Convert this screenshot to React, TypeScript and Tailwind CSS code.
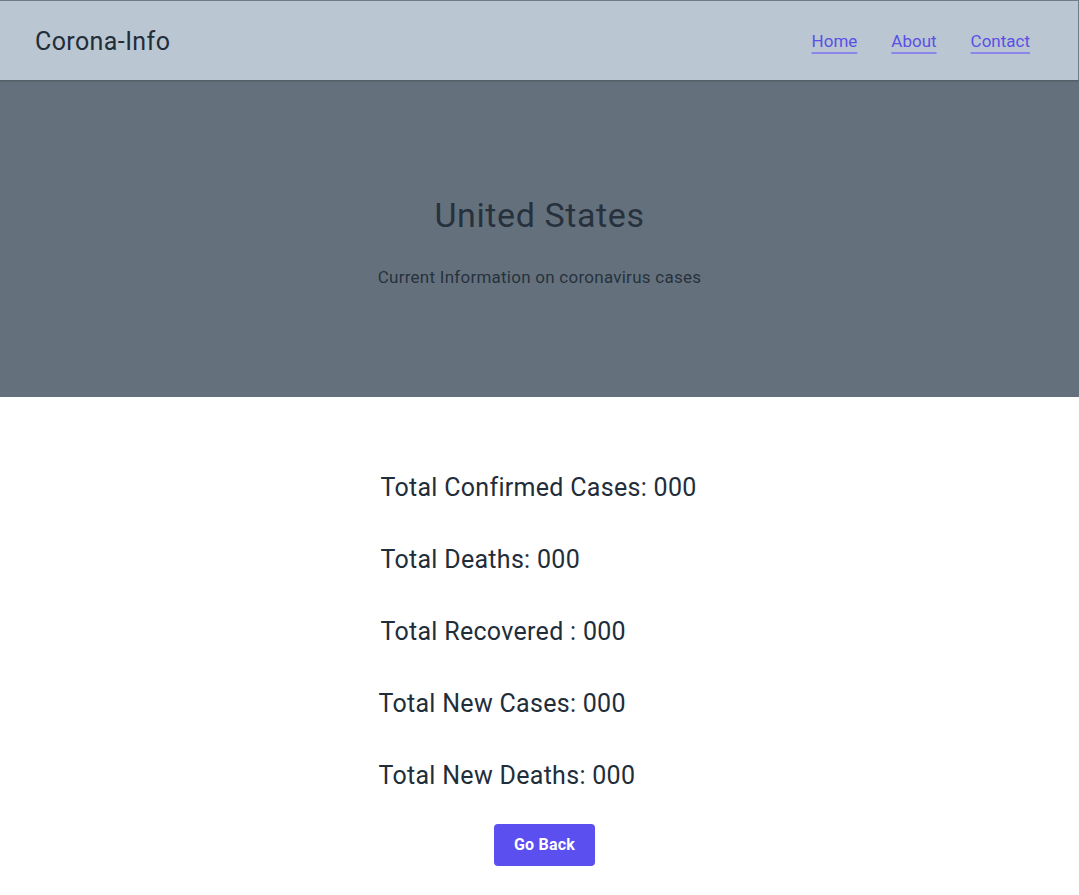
import React from "react";

export default function App() {
  const stats = [
    { label: "Total Confirmed Cases: 000", shift: false },
    { label: "Total Deaths: 000", shift: false },
    { label: "Total Recovered : 000", shift: false },
    { label: "Total New Cases: 000", shift: true },
    { label: "Total New Deaths: 000", shift: true },
  ];
  return (
    <div className="min-h-[895px] bg-white text-[#222d3a]" style={{ fontFamily: "Roboto, 'Noto Sans', sans-serif" }}>
      <nav className="h-[80px] bg-[#bac6d1] border-t border-r border-[#6f7d89] flex items-center justify-between pl-[35px] pr-[48px] shadow-[0_1px_2px_rgba(0,0,0,0.25)] relative z-10">
        <div className="text-[25px] leading-none tracking-[0.4px] pt-[2px]">Corona-Info</div>
        <div className="flex items-center gap-[34px] text-[17px] text-[#5b4fe6] pt-[2px]">
          <a href="#" className="underline decoration-[#8d86ea] decoration-2 underline-offset-[5px]">Home</a>
          <a href="#" className="underline decoration-[#8d86ea] decoration-2 underline-offset-[5px]">About</a>
          <a href="#" className="underline decoration-[#8d86ea] decoration-2 underline-offset-[5px]">Contact</a>
        </div>
      </nav>
      <section className="h-[317px] bg-[#64717c] flex flex-col items-center pt-[115px]">
        <h1 className="text-[34px] leading-[40px] tracking-[0.6px] text-[#27313d]">United States</h1>
        <p className="mt-[30px] text-[17px] leading-[24px] tracking-[0.25px] text-[#27313d]">Current Information on coronavirus cases</p>
      </section>
      <main className="flex flex-col items-center pt-[75px]">
        <div className="flex flex-col gap-[40px] -ml-[2px]">
          {stats.map((s) => (
            <div key={s.label} className={`text-[25px] leading-[32px] tracking-[0.3px] ${s.shift ? "-ml-[2px]" : ""}`}>
              {s.label}
            </div>
          ))}
        </div>
        <button className="mt-[32px] ml-[10px] w-[101px] h-[42px] rounded-[4px] bg-[#5b4ff0] text-white text-[16px] font-bold tracking-[0.2px]">
          Go Back
        </button>
      </main>
    </div>
  );
}
